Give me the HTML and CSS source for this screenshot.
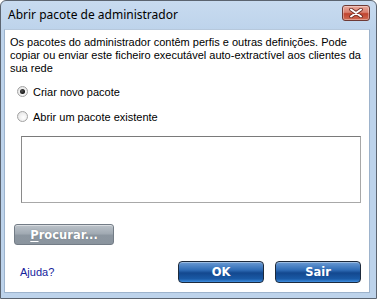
FILE: index.html
```html
<!DOCTYPE html>
<html lang="pt">
<head>
<meta charset="utf-8">
<title>Abrir pacote de administrador</title>
<link rel="stylesheet" href="styles.css">
</head>
<body>
<div class="window">
  <div class="titlebar">
    <span class="title">Abrir pacote de administrador</span>
    <span class="close">
      <svg width="14" height="10" viewBox="0 0 14 10"><path d="M2 1.5 L12 8.5 M12 1.5 L2 8.5" stroke="#6b2a22" stroke-width="3.6" stroke-linecap="round"/><path d="M2 1.5 L12 8.5 M12 1.5 L2 8.5" stroke="#ffffff" stroke-width="2" stroke-linecap="round"/></svg>
    </span>
  </div>
  <div class="client">
    <p class="intro">Os pacotes do administrador contêm perfis e outras definições. Pode copiar ou enviar este ficheiro executável auto-extractível aos clientes da sua rede</p>
    <div class="options">
      <label class="radio-row"><span class="radio checked"></span>Criar novo pacote</label>
      <label class="radio-row"><span class="radio"></span>Abrir um pacote existente</label>
    </div>
    <div class="pathbox"></div>
    <div class="browse-row">
      <span class="btn-gray"><u>P</u>rocurar...</span>
    </div>
    <div class="footer">
      <span class="help">Ajuda?</span>
      <div class="actions">
        <span class="btn-blue">OK</span>
        <span class="btn-blue">Sair</span>
      </div>
    </div>
  </div>
</div>
</body>
</html>
```
FILE: styles.css
```css
html, body {
  margin: 0;
  padding: 0;
  background: #ffffff;
}
.window {
  width: 377px;
  height: 299px;
  box-sizing: border-box;
  border: 1px solid #5b6470;
  border-radius: 6px 6px 0 0;
  background: linear-gradient(#c8dbf0, #bdd3eb 30px, #bdd3eb);
  display: flex;
  flex-direction: column;
}
.titlebar {
  height: 28px;
  display: flex;
  align-items: flex-start;
  justify-content: space-between;
  padding-left: 7px;
  padding-right: 6px;
}
.title {
  font-family: "Noto Sans", sans-serif;
  font-size: 12px;
  color: #000;
  margin-top: 6px;
  line-height: 16px;
}
.close {
  margin-top: 4px;
  width: 28px;
  height: 16px;
  box-sizing: border-box;
  border: 1px solid #6e3a35;
  border-radius: 3px;
  background: linear-gradient(#e9a99c, #d9806f 45%, #c0442f 55%, #cf6a52);
  display: flex;
  align-items: center;
  justify-content: center;
  box-shadow: inset 0 0 0 1px rgba(255,255,255,0.35);
}
.client {
  flex: 1;
  margin: 0 6px 5px 3px;
  background: #ffffff;
  border: 1px solid #9db3cc;
  border-top-color: #b6c8dc;
  display: flex;
  flex-direction: column;
  font-family: "Liberation Sans", Arial, sans-serif;
  font-size: 11px;
  color: #000;
}
.intro {
  margin: 6px 8px 0 5px;
  line-height: 13px;
}
.options {
  display: flex;
  flex-direction: column;
  gap: 12px;
  margin-top: 10px;
  padding-left: 12px;
}
.radio-row {
  display: flex;
  align-items: center;
  height: 13px;
}
.radio {
  width: 11px;
  height: 11px;
  box-sizing: border-box;
  border-radius: 50%;
  border: 1px solid #a3a3a3;
  background: radial-gradient(circle at 60% 60%, #ffffff 0, #ececec 60%, #d4d4d4 100%);
  margin-right: 5px;
  position: relative;
}
.radio.checked::after {
  content: "";
  position: absolute;
  left: 2px;
  top: 2px;
  width: 5px;
  height: 5px;
  border-radius: 50%;
  background: radial-gradient(circle at 40% 40%, #555 0, #111 70%);
}
.pathbox {
  margin: 13px 0 0 16px;
  width: 340px;
  height: 67px;
  box-sizing: border-box;
  border: 1px solid #a8a8a8;
  border-top-color: #7a7a7a;
  border-left-color: #8a8a8a;
  background: #fff;
}
.browse-row {
  margin-top: 21px;
  padding-left: 9px;
  display: flex;
}
.btn-gray {
  width: 100px;
  height: 21px;
  box-sizing: border-box;
  border: 1px solid #737c86;
  border-radius: 3px;
  background: linear-gradient(#bcc3ca, #a1aab3 45%, #8c96a0 55%, #8a949e);
  box-shadow: inset 0 1px 0 rgba(255,255,255,0.45);
  display: flex;
  align-items: center;
  justify-content: center;
  font-family: "DejaVu Sans", Verdana, sans-serif;
  font-weight: bold;
  font-size: 11.5px;
  color: #ffffff;
  text-shadow: 0 0 1px rgba(70,80,90,0.6);
}
.btn-gray u {
  text-decoration-thickness: 1px;
  text-underline-offset: 2px;
}
.footer {
  margin-top: 16px;
  display: flex;
  align-items: center;
  justify-content: space-between;
  padding-left: 15px;
  padding-right: 8px;
}
.help {
  color: #14229c;
  font-size: 11px;
}
.actions {
  display: flex;
  gap: 11px;
}
.btn-blue {
  width: 86px;
  height: 22px;
  box-sizing: border-box;
  border: 1px solid #1d2a3c;
  border-radius: 4px;
  background: linear-gradient(#6b9bd4, #2f6cb6 40%, #13488f 55%, #1a5aa6 85%, #3f8ee0);
  box-shadow: inset 0 1px 0 rgba(255,255,255,0.35);
  display: flex;
  align-items: center;
  justify-content: center;
  font-family: "DejaVu Sans", Verdana, sans-serif;
  font-weight: bold;
  font-size: 11.5px;
  color: #ffffff;
}
```
